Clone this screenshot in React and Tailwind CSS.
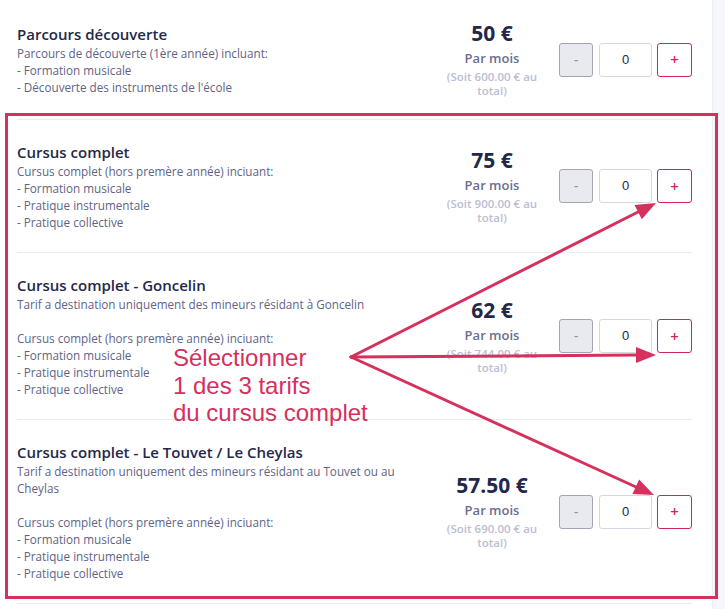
import React from 'react';

const tarifs = [
    {
        title: 'Parcours découverte',
        lines: ["Parcours de découverte (1ère année) incluant:", '- Formation musicale', "- Découverte des instruments de l'école"],
        price: '50 €',
        total: '600.00',
    },
    {
        title: 'Cursus complet',
        lines: ['Cursus complet (hors premère année) inciuant:', '- Formation musicale', '- Pratique instrumentale', '- Pratique collective'],
        price: '75 €',
        total: '900.00',
    },
    {
        title: 'Cursus complet - Goncelin',
        lines: ['Tarif a destination uniquement des mineurs résidant à Goncelin', '', 'Cursus complet (hors premère année) inciuant:', '- Formation musicale', '- Pratique instrumentale', '- Pratique collective'],
        price: '62 €',
        total: '744.00',
    },
    {
        title: 'Cursus complet - Le Touvet / Le Cheylas',
        lines: ['Tarif a destination uniquement des mineurs résidant au Touvet ou au Cheylas', '', 'Cursus complet (hors premère année) inciuant:', '- Formation musicale', '- Pratique instrumentale', '- Pratique collective'],
        price: '57.50 €',
        total: '690.00',
    },
];

const TarifRow = ({ tarif }) => (
    <div className="flex items-center border-b border-[#ebecf0] pt-[21px] pb-[21px]">
        <div className="flex-1 pr-[25px]">
            <h3 className="text-[15px] leading-[22px] font-semibold text-[#23284a]">{tarif.title}</h3>
            {tarif.lines.map((line, i) =>
                line === '' ? (
                    <div key={i} className="h-[17px]"></div>
                ) : (
                    <p key={i} className="text-[11.7px] leading-[17px] text-[#5f6386]">{line}</p>
                )
            )}
        </div>
        <div className="w-[100px] text-center">
            <div className="text-[21px] leading-[25px] font-bold text-[#23284a]">{tarif.price}</div>
            <div className="text-[13px] leading-[24px] font-semibold text-[#6b6e8f]">Par mois</div>
            <div className="text-[11.5px] leading-[14px] font-semibold text-[#bcbed2] px-[4px]">
                (Soit {tarif.total} € au total)
            </div>
        </div>
        <div className="flex items-center ml-[17px]">
            <button className="w-[34px] h-[34px] rounded-[3px] bg-[#e9eaef] border border-[#a3a5b3] text-[#8f92a3] text-[13px] font-semibold">-</button>
            <div className="w-[53px] h-[34px] ml-[6px] rounded-[3px] border border-[#d6d8e1] bg-white flex items-center justify-center text-[13px] text-[#23284a] font-['Liberation_Sans',sans-serif]">0</div>
            <button className="w-[35px] h-[34px] ml-[5px] rounded-[3px] border border-[#d3235a] bg-white text-[#d3235a] text-[15px] font-semibold">+</button>
        </div>
    </div>
);

export default function App() {
    return (
        <div className="relative flex w-[725px] h-[609px] overflow-hidden bg-[#f6f7fb] font-['Open_Sans',sans-serif]">
            <div className="w-[713px] h-full bg-white border-r border-[#eceef3] pl-[17px] pr-[20px]">
                {tarifs.map((t) => (
                    <TarifRow key={t.title} tarif={t} />
                ))}
            </div>

            {/* annotation overlay */}
            <div className="absolute left-[5px] top-[113px] w-[713px] h-[486px] border-[3px] border-[#d6305d] pointer-events-none"></div>
            <svg className="absolute inset-0 pointer-events-none" width="725" height="609" viewBox="0 0 725 609">
                <g stroke="#d6305d" strokeWidth="3" strokeLinecap="round" fill="none">
                    <line x1="351" y1="357" x2="638" y2="212" />
                    <line x1="351" y1="357" x2="636" y2="355" />
                    <line x1="351" y1="357" x2="636" y2="487" />
                </g>
                <g fill="#d6305d">
                    <polygon points="656,203 641.8,219.2 634.5,204.9" />
                    <polygon points="656,355 636,363.1 636,347.1" />
                    <polygon points="654,495 632.5,494 639.1,479.4" />
                </g>
            </svg>
            <div className="absolute left-[173px] top-[344px] text-[24px] leading-[27.5px] text-[#d6305d] font-['Liberation_Sans',sans-serif] pointer-events-none">
                <div>Sélectionner</div>
                <div>1 des 3 tarifs</div>
                <div>du cursus complet</div>
            </div>
        </div>
    );
}
